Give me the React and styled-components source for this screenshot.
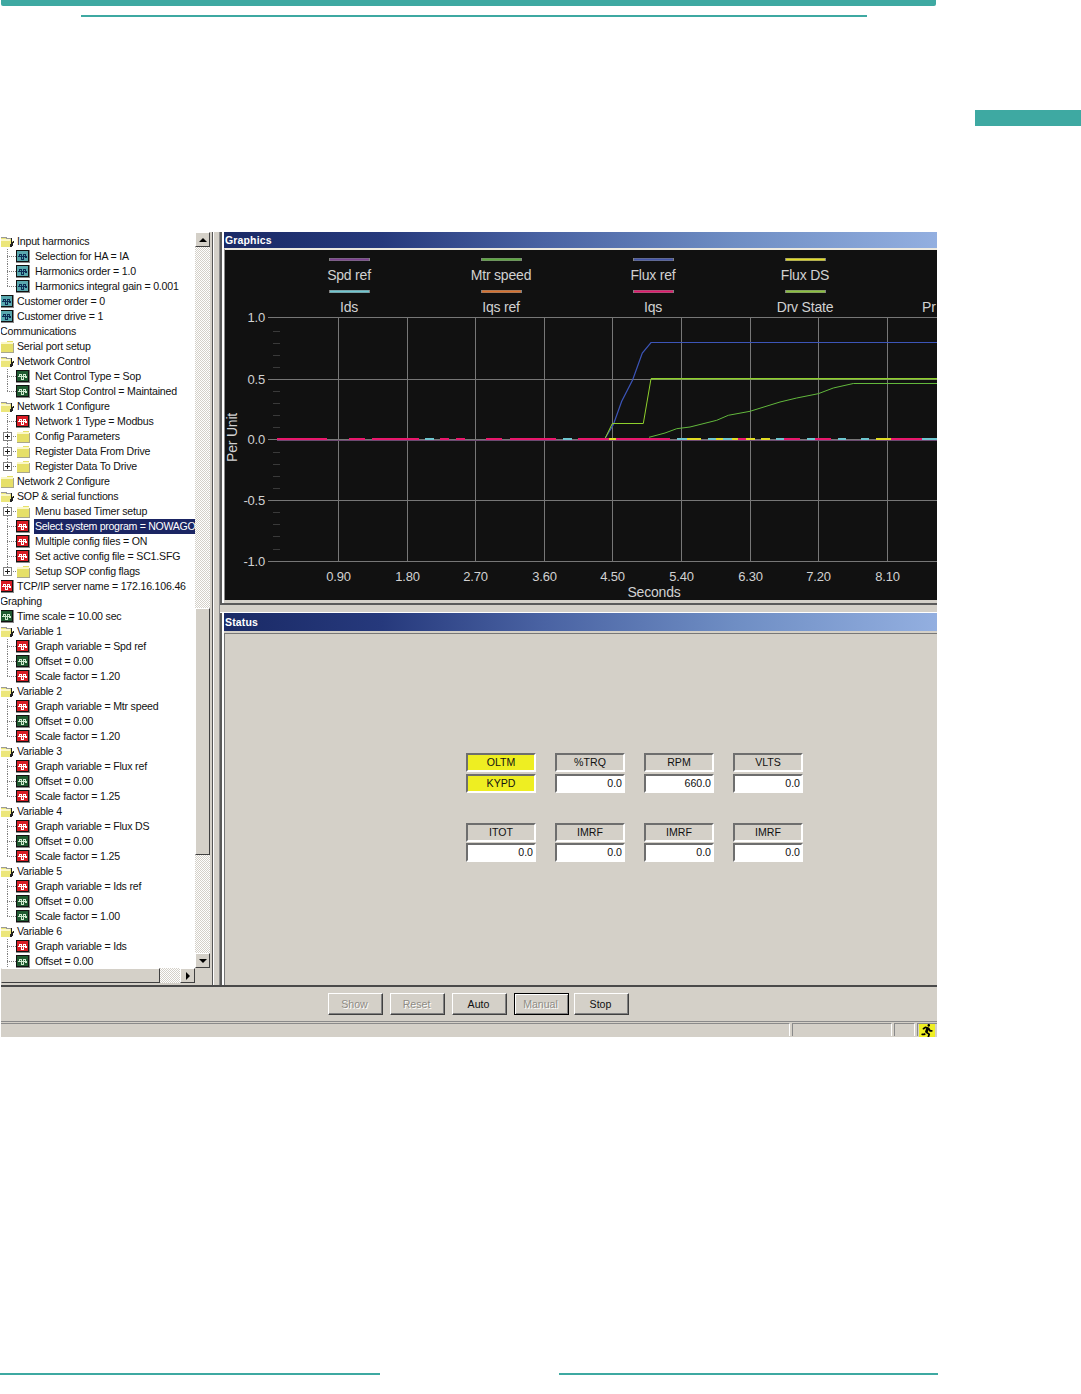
import React from "react";
import styled, { createGlobalStyle } from "styled-components";
import { FaRunning } from "react-icons/fa";

const TEAL = "#3ea9a2";
const FACE = "#d4d0c8";
const UI_FONT = `"Liberation Sans", Arial, sans-serif`;

const GlobalStyle = createGlobalStyle`
  html, body { margin: 0; padding: 0; background: #fff; }
  body { font-family: ${UI_FONT}; }
`;

const Page = styled.div`
  width: 1081px;
  height: 1394px;
  display: flex;
  flex-direction: column;
  overflow: hidden;
  background: #fff;
`;

const TopBand = styled.div`
  width: 935px;
  height: 6px;
  margin-left: 1px;
  background: ${TEAL};
  border-radius: 0 0 2px 2px;
`;

const SubBand = styled.div`
  width: 786px;
  height: 2px;
  margin: 9px 0 0 81px;
  background: ${TEAL};
`;

const TabRow = styled.div`
  display: flex;
  justify-content: flex-end;
  margin-top: 93px;
`;

const SideTab = styled.div`
  width: 106px;
  height: 16px;
  background: ${TEAL};
`;

const Screen = styled.div`
  width: 937px;
  height: 805px;
  margin-top: 106px;
  display: flex;
  flex-direction: column;
  overflow: hidden;
  box-sizing: border-box;
  border-left: 1px solid #fff;
  background: ${FACE};
  color: #111;
  font-size: 10.6px;
  letter-spacing: -0.2px;
`;

const Workspace = styled.div`
  height: 753px;
  display: flex;
  border-bottom: 2px solid #4a4a4a;
  box-sizing: content-box;
`;

/* tree side */
const TreePane = styled.div`
  width: 212px;
  flex: none;
  display: flex;
  flex-direction: column;
  padding-right: 2px;
  border-right: 1px solid #555;
  box-sizing: border-box;
`;

const TreeMain = styled.div`
  display: flex;
  height: 736px;
`;

const TreeList = styled.div`
  width: 194px;
  flex: none;
  padding-top: 1.5px;
  overflow: hidden;
  background: #fff;
  box-sizing: border-box;
`;

const Row = styled.div`
  height: 15px;
  display: flex;
  align-items: center;
  white-space: nowrap;
`;

const Gutter = styled.span`
  width: 15px;
  height: 15px;
  flex: none;
  display: flex;
  align-items: center;
  padding-left: 2px;
  box-sizing: border-box;
  background-image: repeating-linear-gradient(#808080 0 1px, transparent 1px 2px),
    repeating-linear-gradient(90deg, #808080 0 1px, transparent 1px 2px);
  background-repeat: no-repeat;
  background-position: 6px 0, 6px 7px;
  background-size: 1px ${(p) => (p.$last ? "8px" : "15px")}, 9px 1px;
`;

const PlusBox = styled.span`
  width: 9px;
  height: 9px;
  display: block;
  border: 1px solid #808080;
  box-sizing: border-box;
  background: linear-gradient(#222, #222) center / 5px 1px no-repeat,
    linear-gradient(#222, #222) center / 1px 5px no-repeat, #fff;
`;

const IconSlot = styled.span`
  width: 14px;
  height: 13px;
  flex: none;
  display: block;
  margin-left: ${(p) => (p.$root ? "-1px" : "0")};
`;

const Label = styled.span`
  margin-left: ${(p) => (p.$bare ? "-2px" : p.$root ? "2px" : "4px")};
  padding: 1px 1px;
  line-height: 13px;
  flex: ${(p) => (p.$selected ? "1" : "none")};
  min-width: 0;
  overflow: hidden;
  letter-spacing: ${(p) => (p.$selected ? "-0.3px" : "inherit")};
  background: ${(p) => (p.$selected ? "#1b2563" : "transparent")};
  color: ${(p) => (p.$selected ? "#fff" : "#111")};
`;

const VScroll = styled.div`
  width: 15px;
  flex: none;
  display: flex;
  flex-direction: column;
  background: repeating-conic-gradient(${FACE} 0 25%, #fff 0 50%) 0 0 / 2px 2px;
`;

const ScrollButton = styled.div`
  width: 15px;
  height: 15px;
  flex: none;
  display: flex;
  align-items: center;
  justify-content: center;
  background: ${FACE};
  box-sizing: border-box;
  border: 1px solid;
  border-color: #fff #404040 #404040 #fff;
`;

const Arrow = styled.span`
  width: 0;
  height: 0;
  display: block;
  border-style: solid;
  border-color: transparent;
  ${(p) => p.$dir === "up" && "border-width: 0 4px 4px; border-bottom-color: #000;"}
  ${(p) => p.$dir === "down" && "border-width: 4px 4px 0; border-top-color: #000;"}
  ${(p) => p.$dir === "right" && "border-width: 4px 0 4px 4px; border-left-color: #000;"}
`;

const TrackGap = styled.div`
  height: ${(p) => p.$size}px;
  flex: ${(p) => (p.$fill ? "1" : "none")};
`;

const VThumb = styled.div`
  height: 247px;
  flex: none;
  background: ${FACE};
  box-sizing: border-box;
  border: 1px solid;
  border-color: #fff #404040 #404040 #fff;
`;

const HScrollRow = styled.div`
  height: 15px;
  display: flex;
`;

const HTrack = styled.div`
  width: 194px;
  flex: none;
  display: flex;
  background: repeating-conic-gradient(${FACE} 0 25%, #fff 0 50%) 0 0 / 2px 2px;
`;

const HThumb = styled.div`
  width: 159px;
  flex: none;
  margin-right: 20px;
  background: ${FACE};
  box-sizing: border-box;
  border: 1px solid;
  border-color: #fff #404040 #404040 transparent;
`;

/* right side */
const VSplit = styled.div`
  width: 7px;
  flex: none;
  background: ${FACE};
  border-left: 1px solid #fff;
  border-right: 1px solid #8a8a8a;
  box-sizing: border-box;
`;

const RightColumn = styled.div`
  flex: 1;
  min-width: 0;
  display: flex;
  flex-direction: column;
`;

const Panel = styled.div`
  height: ${(p) => p.$height}px;
  flex: none;
  display: flex;
  flex-direction: column;
  padding-left: 1px;
  box-sizing: border-box;
  border-left: 2px solid #5a5a5a;
  box-shadow: inset 2px 0 0 #fff;
  overflow: hidden;
`;

const TitleBar = styled.div`
  height: ${(p) => p.$height}px;
  flex: none;
  margin-left: 1px;
  padding-left: 1px;
  display: flex;
  align-items: center;
  font-size: 10.5px;
  font-weight: 700;
  letter-spacing: 0.15px;
  color: #fff;
  background: linear-gradient(90deg, #1a2a66 0, #26397c 22%, #4a63a3 45%, #6f8ec4 72%, #93afe0 100%);
`;

const ChartFrame = styled.div`
  height: 352px;
  flex: none;
  margin-left: 1px;
  border-top: 2px solid #ece9e0;
  box-sizing: border-box;
  border-left: 1px solid #888;
  background: #111;
`;

const ChartSvg = styled.svg`
  display: block;
  width: 712px;
  height: 350px;
`;

const HSplit = styled.div`
  height: 7px;
  flex: none;
  background: ${FACE};
  border-top: 2px solid #5a5a5a;
  border-bottom: 1px solid #fff;
  box-sizing: content-box;
`;

const StatusBody = styled.div`
  flex: 1;
  margin: 2px 0 0 1px;
  padding: 119px 0 0 241px;
  display: flex;
  flex-direction: column;
  gap: 30px;
  background: ${FACE};
  border-top: 1px solid #777;
  border-left: 1px solid #777;
  box-sizing: border-box;
`;

const MeterGrid = styled.div`
  display: grid;
  grid-template-columns: repeat(4, 70px);
  grid-auto-rows: 19px;
  column-gap: 19px;
  row-gap: ${(p) => (p.$tight ? "1px" : "2px")};
`;

const Meter = styled.div`
  height: 19px;
  display: flex;
  align-items: center;
  justify-content: ${(p) => (p.$value ? "flex-end" : "center")};
  padding: 0 ${(p) => (p.$value ? "1px" : "0")} 2px 0;
  font-size: 10.6px;
  letter-spacing: 0;
  color: #111;
  box-sizing: border-box;
  border-style: solid;
  border-width: 2px;
  border-color: #6e6e6e #fff #fff #6e6e6e;
  background: ${(p) => (p.$lit ? "#eeee22" : p.$value ? "#fff" : FACE)};
`;

const ButtonBar = styled.div`
  height: 35px;
  flex: none;
  display: flex;
  align-items: center;
  gap: 7px;
  padding: 0 0 1px 327px;
  box-sizing: border-box;
  border-bottom: 1px solid #8a8a8a;
`;

const PushButton = styled.div`
  width: 55px;
  height: 22px;
  flex: none;
  display: flex;
  align-items: center;
  justify-content: center;
  margin-right: ${(p) => (p.$default ? "-2px" : "0")};
  padding-right: 2px;
  box-sizing: border-box;
  font-size: 10.6px;
  letter-spacing: 0;
  background: ${FACE};
  color: ${(p) => (p.$off ? "#8f8c85" : "#111")};
  text-shadow: ${(p) => (p.$off ? "1px 1px 0 #fff" : "none")};
  border: 1px solid;
  border-color: ${(p) => (p.$default ? "#000" : "#fff #404040 #404040 #fff")};
  box-shadow: ${(p) =>
    p.$default
      ? "inset 1px 1px 0 #fff, inset -1px -1px 0 #808080"
      : "inset -1px -1px 0 #808080"};
`;

const StatusBar = styled.div`
  height: 14px;
  flex: none;
  display: flex;
  padding-top: 1px;
  box-sizing: border-box;
`;

const StatusPane = styled.div`
  width: ${(p) => p.$width}px;
  flex: ${(p) => (p.$fill ? "1" : "none")};
  margin-left: ${(p) => (p.$first ? "0" : "2px")};
  box-sizing: border-box;
  border-top: 1px solid #8a8a8a;
  border-left: ${(p) => (p.$first ? "0" : "1px solid #8a8a8a")};
  border-right: 1px solid #fff;
`;

const RunPane = styled.div`
  width: 20px;
  flex: none;
  margin-left: 2px;
  padding-left: 1px;
  box-sizing: border-box;
  border-left: 1px solid #8a8a8a;
  border-top: 1px solid #8a8a8a;
  display: flex;
`;

const RunSlot = styled.div`
  width: 16px;
  height: 13px;
  display: flex;
  align-items: center;
  justify-content: center;
  background: #eeee22;
  color: #000;
  font-size: 14px;
`;

const Footer = styled.div`
  margin-top: 336px;
  display: flex;
`;

const FootRule = styled.div`
  width: ${(p) => p.$width}px;
  height: 2px;
  margin-left: ${(p) => p.$offset || 0}px;
  background: ${TEAL};
`;

/* small tree icons */
const WAVE = {
  teal: { bg: "#58a8ae", line: "#0d2c55" },
  green: { bg: "#1f5a30", line: "#cfe8cf" },
  red: { bg: "#d91c24", line: "#ffffff" },
};

function WaveIcon({ kind }) {
  const c = WAVE[kind];
  return (
    <svg width="14" height="13" viewBox="0 0 14 13" shapeRendering="crispEdges">
      <rect x="0" y="0" width="14" height="13" fill="#8a8a8a" />
      <rect x="0" y="0" width="13" height="12" fill="#111" />
      <rect x="1" y="1" width="11" height="10" fill={c.bg} />
      <path d="M2 6h9" stroke={c.line} strokeWidth="1" />
      <path d="M3 7V4h2v5h2V4h2v3h2" stroke={c.line} strokeWidth="1" fill="none" />
    </svg>
  );
}

function FolderIcon({ open }) {
  if (open) {
    return (
      <svg width="14" height="13" viewBox="0 0 14 13" shapeRendering="crispEdges">
        <path d="M0 2h6l1 1h4v3h3l-2 6H0z" fill="#ece67a" />
        <path d="M0 2.5h6l1 1h4" stroke="#999" strokeWidth="1" fill="none" />
        <rect x="0" y="4" width="10" height="2" fill="#fbf8c8" />
        <path d="M11.5 3v4M13.5 6l-2 6M12 7l-2 5" stroke="#222" strokeWidth="1" fill="none" />
      </svg>
    );
  }
  return (
    <svg width="14" height="13" viewBox="0 0 14 13" shapeRendering="crispEdges">
      <path d="M1 2h5l1-1h5l1 1v10H1z" fill="#e6df68" />
      <rect x="1" y="2" width="12" height="2" fill="#fbf8c8" />
      <path d="M13.5 3v9.5H1" stroke="#a8a68c" strokeWidth="1" fill="none" />
    </svg>
  );
}

// text, icon kind, level, flags
const TREE = [
  ["Input harmonics", "open", 0],
  ["Selection for HA = IA", "teal", 1],
  ["Harmonics order = 1.0", "teal", 1],
  ["Harmonics integral gain = 0.001", "teal", 1, "last"],
  ["Customer order = 0", "teal", 0],
  ["Customer drive = 1", "teal", 0],
  ["Communications", null, 0],
  ["Serial port setup", "closed", 0],
  ["Network Control", "open", 0],
  ["Net Control Type = Sop", "green", 1],
  ["Start Stop Control = Maintained", "green", 1, "last"],
  ["Network 1 Configure", "open", 0],
  ["Network 1 Type = Modbus", "red", 1],
  ["Config Parameters", "closed", 1, "plus"],
  ["Register Data From Drive", "closed", 1, "plus"],
  ["Register Data To Drive", "closed", 1, "plus last"],
  ["Network 2 Configure", "closed", 0],
  ["SOP & serial functions", "open", 0],
  ["Menu based Timer setup", "closed", 1, "plus"],
  ["Select system program = NOWAGO", "red", 1, "selected"],
  ["Multiple config files = ON", "red", 1],
  ["Set active config file = SC1.SFG", "red", 1],
  ["Setup SOP config flags", "closed", 1, "plus last"],
  ["TCP/IP server name = 172.16.106.46", "red", 0],
  ["Graphing", null, 0],
  ["Time scale = 10.00 sec", "green", 0],
  ["Variable 1", "open", 0],
  ["Graph variable = Spd ref", "red", 1],
  ["Offset = 0.00", "green", 1],
  ["Scale factor = 1.20", "red", 1, "last"],
  ["Variable 2", "open", 0],
  ["Graph variable = Mtr speed", "red", 1],
  ["Offset = 0.00", "green", 1],
  ["Scale factor = 1.20", "red", 1, "last"],
  ["Variable 3", "open", 0],
  ["Graph variable = Flux ref", "red", 1],
  ["Offset = 0.00", "green", 1],
  ["Scale factor = 1.25", "red", 1, "last"],
  ["Variable 4", "open", 0],
  ["Graph variable = Flux DS", "red", 1],
  ["Offset = 0.00", "green", 1],
  ["Scale factor = 1.25", "red", 1, "last"],
  ["Variable 5", "open", 0],
  ["Graph variable = Ids ref", "red", 1],
  ["Offset = 0.00", "green", 1],
  ["Scale factor = 1.00", "green", 1, "last"],
  ["Variable 6", "open", 0],
  ["Graph variable = Ids", "red", 1],
  ["Offset = 0.00", "green", 1],
];

function TreeRow({ text, kind, level, flags = "" }) {
  const root = level === 0;
  const selected = flags.includes("selected");
  return (
    <Row>
      {!root && (
        <Gutter $last={flags.includes("last")}>
          {flags.includes("plus") && <PlusBox />}
        </Gutter>
      )}
      {kind && (
        <IconSlot $root={root}>
          {kind === "open" || kind === "closed" ? (
            <FolderIcon open={kind === "open"} />
          ) : (
            <WaveIcon kind={kind} />
          )}
        </IconSlot>
      )}
      <Label $root={root} $bare={!kind} $selected={selected}>
        {text}
      </Label>
    </Row>
  );
}

/* chart data, in page pixels */
const GRID_X = [338.5, 407.5, 475.5, 544.5, 612.5, 681.5, 750.5, 818.5, 887.5];
const GRID_Y = [
  [317.5, "1.0"],
  [379.5, "0.5"],
  [439.5, "0.0"],
  [500.5, "-0.5"],
  [561.5, "-1.0"],
];
const X_LABELS = ["0.90", "1.80", "2.70", "3.60", "4.50", "5.40", "6.30", "7.20", "8.10"];
const MINOR_Y = [331, 343, 355, 367, 391, 403, 415, 427, 452, 464, 476, 488, 512, 524, 536, 549];
const LEGEND = [
  ["Spd ref", 349, "#7b3f8f", 0],
  ["Mtr speed", 501, "#5aa83c", 0],
  ["Flux ref", 653, "#4053a8", 0],
  ["Flux DS", 805, "#e2dc24", 0],
  ["Ids", 349, "#6ec6d0", 1],
  ["Iqs ref", 501, "#d8702c", 1],
  ["Iqs", 653, "#e0186c", 1],
  ["Drv State", 805, "#8ac03c", 1],
];
const MAGENTA = [[277, 327], [349, 365], [372, 419], [440, 449], [456, 465], [486, 502], [510, 556], [578, 670], [738, 746], [784, 800], [815, 831], [891, 922]];
const CYAN = [[425, 434], [563, 572], [677, 687], [708, 716], [723, 732], [776, 784], [807, 815], [838, 846], [861, 869], [922, 937]];
const YELLOW = [[609, 616], [687, 701], [716, 723], [732, 738], [746, 755], [761, 770], [876, 891]];

const FLUX_REF = "605.3,438 613.3,424.7 621.7,401.3 632.7,379.7 642.3,353 651,342.5 937,342.5";
const DRV_RISE = "605.3,438 612.3,423.5 643.3,423.5 651,378.7";
const MTR_SPEED =
  "649,437.3 665,433 676.7,428.7 690,427 716.7,420.3 728.3,415.3 750,411.3 780,402 796.7,398 818.3,393.7 833.3,388 853.3,383.5 937,383.5";

function Segments({ list, color }) {
  return list.map(([a, b]) => (
    <rect key={a} x={a} y="438" width={b - a} height="2" fill={color} />
  ));
}

function Chart() {
  const text = { fontFamily: UI_FONT, fontSize: 14, fill: "#d2d2d2" };
  const tick = { ...text, fontSize: 13 };
  return (
    <ChartSvg viewBox="225 250 712 350">
      {GRID_Y.map(([y, label]) => (
        <g key={label}>
          <line x1="268" x2="937" y1={y} y2={y} stroke="#777" />
          <text x="265" y={y + 4.5} textAnchor="end" {...tick}>{label}</text>
        </g>
      ))}
      {GRID_X.map((x, i) => (
        <g key={x}>
          <line x1={x} x2={x} y1="317" y2="561" stroke="#777" />
          <text x={x} y="581" textAnchor="middle" {...tick}>{X_LABELS[i]}</text>
        </g>
      ))}
      {MINOR_Y.map((y) => (
        <line key={y} x1="273" x2="280" y1={y + 0.5} y2={y + 0.5} stroke="#3a3a3a" />
      ))}
      {LEGEND.map(([label, cx, color, row]) => (
        <g key={label}>
          <rect x={cx - 20} y={row ? 290 : 258} width="41" height="3" fill="#808080" />
          <rect x={cx - 19} y={row ? 290.5 : 258.5} width="39" height="2" fill={color} />
          <text x={cx} y={row ? 312 : 280} textAnchor="middle" {...text}>{label}</text>
        </g>
      ))}
      <text x="922" y="312" {...text}>Pr</text>
      <text x="654" y="597" textAnchor="middle" {...text}>Seconds</text>
      <text transform="translate(237 437.5) rotate(-90)" textAnchor="middle" {...text}>Per Unit</text>
      <line x1="277" x2="937" y1="440.5" y2="440.5" stroke="#6d4a72" />
      <Segments list={MAGENTA} color="#e8186c" />
      <Segments list={CYAN} color="#6ec6d0" />
      <Segments list={YELLOW} color="#e2dc24" />
      <polyline points={MTR_SPEED} fill="none" stroke="#62b83c" strokeWidth="1" />
      <polyline points={FLUX_REF} fill="none" stroke="#3c55b8" strokeWidth="1.2" />
      <polyline points={DRV_RISE} fill="none" stroke="#8ed02c" strokeWidth="1" />
      <line x1="651" x2="937" y1="378.7" y2="378.7" stroke="#8ed02c" strokeWidth="1.6" />
    </ChartSvg>
  );
}

const METERS = [
  [["OLTM", "KYPD"], ["%TRQ", "0.0"], ["RPM", "660.0"], ["VLTS", "0.0"]],
  [["ITOT", "0.0"], ["IMRF", "0.0"], ["IMRF", "0.0"], ["IMRF", "0.0"]],
];

export default function App() {
  return (
    <Page>
      <GlobalStyle />
      <TopBand />
      <SubBand />
      <TabRow>
        <SideTab />
      </TabRow>
      <Screen>
        <Workspace>
          <TreePane>
            <TreeMain>
              <TreeList>
                {TREE.map(([text, kind, level, flags], i) => (
                  <TreeRow key={i} text={text} kind={kind} level={level} flags={flags} />
                ))}
              </TreeList>
              <VScroll>
                <ScrollButton><Arrow $dir="up" /></ScrollButton>
                <TrackGap $size={361} />
                <VThumb />
                <TrackGap $fill />
                <ScrollButton><Arrow $dir="down" /></ScrollButton>
              </VScroll>
            </TreeMain>
            <HScrollRow>
              <HTrack>
                <HThumb />
                <ScrollButton><Arrow $dir="right" /></ScrollButton>
              </HTrack>
            </HScrollRow>
          </TreePane>
          <VSplit />
          <RightColumn>
            <Panel $height={371}>
              <TitleBar $height={16}>Graphics</TitleBar>
              <ChartFrame>
                <Chart />
              </ChartFrame>
            </Panel>
            <HSplit />
            <Panel $height={372}>
              <TitleBar $height={18}>Status</TitleBar>
              <StatusBody>
                {METERS.map((group, g) => (
                  <MeterGrid key={g} $tight={g === 1}>
                    {group.map(([head], c) => (
                      <Meter key={c} $lit={head === "OLTM"}>{head}</Meter>
                    ))}
                    {group.map(([, val], c) =>
                      val === "KYPD" ? (
                        <Meter key={c} $lit>{val}</Meter>
                      ) : (
                        <Meter key={c} $value>{val}</Meter>
                      )
                    )}
                  </MeterGrid>
                ))}
              </StatusBody>
            </Panel>
          </RightColumn>
        </Workspace>
        <ButtonBar>
          <PushButton $off>Show</PushButton>
          <PushButton $off>Reset</PushButton>
          <PushButton>Auto</PushButton>
          <PushButton $off $default>Manual</PushButton>
          <PushButton>Stop</PushButton>
        </ButtonBar>
        <StatusBar>
          <StatusPane $first $fill />
          <StatusPane $width={100} />
          <StatusPane $width={21} />
          <RunPane>
            <RunSlot><FaRunning /></RunSlot>
          </RunPane>
        </StatusBar>
      </Screen>
      <Footer>
        <FootRule $width={380} />
        <FootRule $width={379} $offset={179} />
      </Footer>
    </Page>
  );
}
